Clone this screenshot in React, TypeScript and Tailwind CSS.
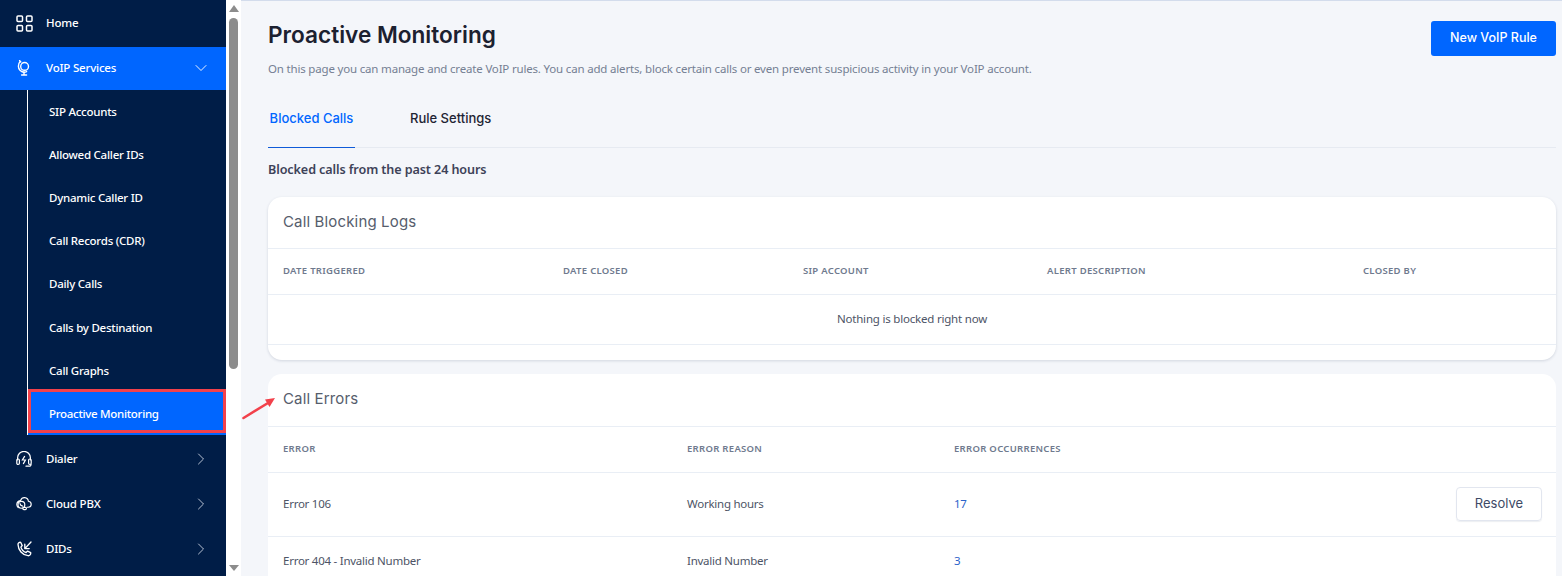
import { ChevronDown, ChevronRight } from "lucide-react";

const subs = ["SIP Accounts", "Allowed Caller IDs", "Dynamic Caller ID", "Call Records (CDR)", "Daily Calls", "Calls by Destination", "Call Graphs"];

function HomeIcon() {
  return (
    <svg width="17" height="17" viewBox="0 0 17 17" fill="none" stroke="currentColor" strokeWidth="1.5">
      <rect x="1" y="1" width="5.5" height="5.5" rx="1" />
      <rect x="10.5" y="1" width="5.5" height="5.5" rx="1" />
      <rect x="1" y="10.5" width="5.5" height="5.5" rx="1" />
      <rect x="10.5" y="10.5" width="5.5" height="5.5" rx="1" />
    </svg>
  );
}

function Globe() {
  return (
    <svg width="14" height="16" viewBox="0 0 14 16" fill="none" stroke="currentColor" strokeWidth="1.4" strokeLinecap="round">
      <circle cx="7.6" cy="6.4" r="3.9" />
      <path d="M3.2 1.6C.8 4 .8 8.4 3.2 10.6c1.8 1.6 4.4 2 6.4 1" />
      <path d="M2.6.6l1.2 1.4M7 12v2.6M4.6 15h5" />
    </svg>
  );
}

function Headset() {
  return (
    <svg width="16" height="16" viewBox="0 0 16 16" fill="none" stroke="currentColor" strokeWidth="1.2" strokeLinecap="round">
      <path d="M1.6 9V6.8a6.4 6.4 0 0 1 12.8 0V9" />
      <rect x=".8" y="8" width="2.6" height="5.4" rx="1.2" />
      <rect x="12.6" y="8" width="2.6" height="5.4" rx="1.2" />
      <path d="M8.6 5.4 6.4 9h3l-2 3.6M15 13.4c0 1.2-1 1.8-2 1.8h-3" />
    </svg>
  );
}

function CloudPhone() {
  return (
    <svg width="16" height="16" viewBox="0 0 16 16" fill="none" stroke="currentColor" strokeWidth="1.15" strokeLinecap="round">
      <path d="M4.6 4.4C5.4 2.4 7 1.4 8.8 1.6c2 .2 3.4 1.8 3.6 3.6 1.6.2 2.8 1.4 2.8 3s-1.2 3-3 3H11" />
      <path d="M4.4 4.6C2.4 5 .8 6.4.8 8.6c0 1.2.6 2.2 1.4 3" />
      <circle cx="5.4" cy="8.8" r="3.4" />
      <path d="M4 7.6c.2 1.3 1 2.1 2.6 2.5" />
      <rect x="6.8" y="11.4" width="3.6" height="2.2" rx="1.1" />
    </svg>
  );
}

function PhoneArrow() {
  return (
    <svg width="15" height="16" viewBox="0 0 15 16" fill="none" stroke="currentColor" strokeWidth="1.35" strokeLinecap="round" strokeLinejoin="round">
      <path d="M1 3.6C.9 2 2.4 1.1 3.6 1.3l1.6 3.2-1.3 1.6c.7 2.5 2.7 4.6 5.2 5.4l1.5-1.4 3.1 1.6c.3 1.6-1 3.2-2.7 3C5.4 14.2 1.2 9.2 1 3.6z" />
      <path d="M14 1 7.8 7.6M7.8 3.2v4.4h4.4" />
    </svg>
  );
}

function TopItem({ icon, label }: { icon: React.ReactNode; label: string }) {
  return (
    <div className="flex h-[45px] items-center text-white">
      <div className="flex w-[48px] shrink-0 justify-center">{icon}</div>
      <span className="-ml-[2px] flex-1 text-[11.5px] font-medium tracking-[-0.2px]">{label}</span>
      <ChevronRight size={20} strokeWidth={1.1} className="mr-[15px] text-[#c8d0de]" />
    </div>
  );
}

function Th({ w, children }: { w: string; children?: React.ReactNode }) {
  return <div className={`${w} shrink-0 text-[9.5px] font-semibold uppercase tracking-[0.3px] text-[#6f7a8e]`}>{children}</div>;
}

export default function App() {
  return (
    <div className="flex h-[576px] w-[1562px] overflow-hidden bg-white font-['Noto_Sans',sans-serif]">
      <aside className="w-[226px] shrink-0 bg-[#001d47]">
        <div className="flex h-[47px] items-center pb-[1px] text-white">
          <div className="flex w-[48px] shrink-0 justify-center"><HomeIcon /></div>
          <span className="-ml-[2px] text-[11.5px] font-medium tracking-[-0.2px]">Home</span>
        </div>
        <div className="flex h-[43px] items-center bg-[#0066ff] pb-[1px] text-white">
          <div className="flex w-[48px] shrink-0 justify-center"><Globe /></div>
          <span className="-ml-[2px] flex-1 text-[11.5px] font-medium tracking-[-0.2px]">VoIP Services</span>
          <ChevronDown size={20} strokeWidth={1.1} className="mr-[15px]" />
        </div>
        <div className="ml-[27px] border-l border-white pt-[0.5px]">
          {subs.map((s, i) => (
            <div key={s} className={`${i === 5 ? "mt-[1px]" : ""} flex h-[43px] items-center pl-[21px] text-[11.5px] font-medium tracking-[-0.25px] text-white`}>{s}</div>
          ))}
          <div className="-mt-[4px] h-[46px] border-b-[2px] border-[#0066ff]">
            <div className="flex h-[44px] items-center border-[3px] border-[#f2414b] bg-[#0066ff] pl-[18px] pt-[6px] text-[11.5px] font-medium tracking-[-0.3px] text-white">
              Proactive Monitoring
            </div>
          </div>
        </div>
        <div className="pt-[2px]">
          <TopItem icon={<Headset />} label="Dialer" />
          <TopItem icon={<CloudPhone />} label="Cloud PBX" />
          <TopItem icon={<PhoneArrow />} label="DIDs" />
        </div>
      </aside>

      <div className="flex w-[15px] shrink-0 flex-col items-center bg-white">
        <div className="mt-[5px] h-0 w-0 border-x-[5px] border-b-[7px] border-x-transparent border-b-[#8c8c8c]" />
        <div className="mt-[6px] h-[351px] w-[9px] rounded-[5px] bg-[#8c8c8c]" />
        <div className="mt-auto mb-[5px] h-0 w-0 border-x-[5px] border-t-[6px] border-x-transparent border-t-[#8c8c8c]" />
      </div>

      <main className="relative flex-1 border-t border-[#d3dcec] bg-[#f4f6fa] pl-[27px] pr-[6px]">
        <div className="flex items-start justify-between pt-[20px]">
          <div>
            <h1 className="font-['Inter',sans-serif] text-[22.6px] font-semibold leading-[28px] text-[#1c2130]">Proactive Monitoring</h1>
            <p className="mt-[11px] text-[11.5px] leading-[17px] tracking-[-0.18px] text-[#757f93]">
              On this page you can manage and create VoIP rules. You can add alerts, block certain calls or even prevent suspicious activity in your VoIP account.
            </p>
          </div>
          <button className="h-[35px] w-[125px] rounded-[3px] bg-[#0066ff] font-['Inter',sans-serif] text-[12.5px] font-medium text-white">New VoIP Rule</button>
        </div>

        <div className="mt-[21px] flex h-[50px] items-start border-b border-[#e6eaf1] font-['Inter',sans-serif] text-[13px] font-medium">
          <div className="flex h-[50px] w-[87px] items-center justify-center border-b border-[#0f5bd8] pb-[8px] text-[#0066ff]">Blocked Calls</div>
          <div className="flex h-[50px] items-center pb-[8px] pl-[55px] text-[#1e2433]">Rule Settings</div>
        </div>

        <div className="mt-[13px] text-[12.6px] font-semibold leading-[18px] tracking-[-0.1px] text-[#3d4258]">Blocked calls from the past 24 hours</div>

        <section className="mt-[18px] rounded-[14px] bg-white shadow-[0_1px_3px_rgba(30,50,90,0.16)]">
          <div className="flex h-[52px] items-center border-b border-[#e9eef5] pl-[15px] font-['Inter',sans-serif] text-[15px] tracking-[0.15px] text-[#565d6c]">Call Blocking Logs</div>
          <div className="flex h-[46px] items-center border-b border-[#e9eef5] pl-[15px]">
            <Th w="w-[280px]">Date triggered</Th>
            <Th w="w-[240px]">Date closed</Th>
            <Th w="w-[244px]">SIP account</Th>
            <Th w="w-[316px]">Alert description</Th>
            <Th w="w-[100px]">Closed by</Th>
          </div>
          <div className="flex h-[50px] items-center justify-center border-b border-[#e9eef5] pb-[2px] text-[11.5px] tracking-[-0.2px] text-[#4d5466]">Nothing is blocked right now</div>
          <div className="h-[15px]" />
        </section>

        <section className="mt-[14px] h-[300px] rounded-t-[14px] bg-white">
          <div className="flex h-[53px] items-center border-b border-[#e9eef5] pb-[1px] pl-[15px] font-['Inter',sans-serif] text-[15px] tracking-[0.15px] text-[#565d6c]">Call Errors</div>
          <div className="flex h-[46px] items-center border-b border-[#e9eef5] pl-[15px]">
            <Th w="w-[404px]">Error</Th>
            <Th w="w-[267px]">Error reason</Th>
            <Th w="w-[200px]">Error occurrences</Th>
          </div>
          <div className="flex h-[64px] items-center border-b border-[#e9eef5] pb-[2px] pl-[15px] text-[11.5px] tracking-[-0.25px] text-[#4d5466]">
            <div className="w-[404px] shrink-0">Error 106</div>
            <div className="w-[267px] shrink-0">Working hours</div>
            <div className="flex-1 text-[#2b63c9]">17</div>
            <button className="mr-[14px] h-[34px] w-[86px] rounded-[4px] border border-[#e2e6ef] font-['Inter',sans-serif] text-[13px] tracking-normal text-[#3d4a66] shadow-[0_1px_1px_rgba(30,50,90,0.08)]">Resolve</button>
          </div>
          <div className="flex h-[50px] items-center pb-[2px] pl-[15px] text-[11.5px] tracking-[-0.25px] text-[#4d5466]">
            <div className="w-[404px] shrink-0">Error 404 - Invalid Number</div>
            <div className="w-[267px] shrink-0">Invalid Number</div>
            <div className="flex-1 text-[#2b63c9]">3</div>
          </div>
        </section>

        <svg className="absolute left-[0px] top-[396px]" width="36" height="26" viewBox="0 0 36 26" fill="none">
          <path d="M2.5 21 27 6" stroke="#f2414b" strokeWidth="2.6" strokeLinecap="round" />
          <path d="M34 1 24 2.5l4.5 7.5z" fill="#f2414b" />
        </svg>
      </main>
    </div>
  );
}
